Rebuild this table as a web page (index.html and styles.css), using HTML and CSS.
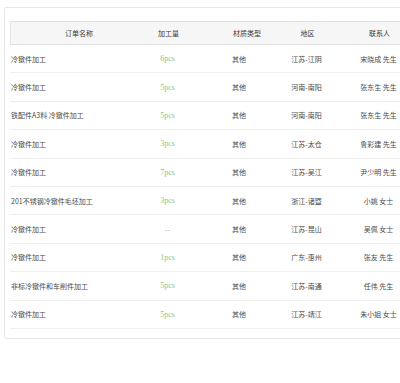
FILE: index.html
```html
<!DOCTYPE html>
<html lang="zh">
<head>
<meta charset="utf-8">
<link rel="stylesheet" href="styles.css">
</head>
<body>
<div class="card">
  <div class="table">
    <div class="row head">
      <div class="c1">订单名称</div>
      <div class="c2">加工量</div>
      <div class="c3">材质类型</div>
      <div class="c4">地区</div>
      <div class="c5">联系人</div>
    </div>
    <div class="row"><div class="c1">冷镦件加工</div><div class="c2 qty">6pcs</div><div class="c3">其他</div><div class="c4">江苏-江阴</div><div class="c5">宋晓成 先生</div></div>
    <div class="row"><div class="c1">冷镦件加工</div><div class="c2 qty">5pcs</div><div class="c3">其他</div><div class="c4">河南-南阳</div><div class="c5">张东生 先生</div></div>
    <div class="row"><div class="c1">铁配件A3料 冷镦件加工</div><div class="c2 qty">5pcs</div><div class="c3">其他</div><div class="c4">河南-南阳</div><div class="c5">张东生 先生</div></div>
    <div class="row"><div class="c1">冷镦件加工</div><div class="c2 qty">3pcs</div><div class="c3">其他</div><div class="c4">江苏-太仓</div><div class="c5">鲁彩建 先生</div></div>
    <div class="row"><div class="c1">冷镦件加工</div><div class="c2 qty">7pcs</div><div class="c3">其他</div><div class="c4">江苏-吴江</div><div class="c5">尹少明 先生</div></div>
    <div class="row"><div class="c1">201不锈钢冷镦件毛坯加工</div><div class="c2 qty">3pcs</div><div class="c3">其他</div><div class="c4">浙江-诸暨</div><div class="c5">小姚 女士</div></div>
    <div class="row"><div class="c1">冷镦件加工</div><div class="c2 dash">--</div><div class="c3">其他</div><div class="c4">江苏-昆山</div><div class="c5">吴佩 女士</div></div>
    <div class="row"><div class="c1">冷镦件加工</div><div class="c2 qty">1pcs</div><div class="c3">其他</div><div class="c4">广东-惠州</div><div class="c5">张友 先生</div></div>
    <div class="row"><div class="c1">非标冷镦件和车削件加工</div><div class="c2 qty">5pcs</div><div class="c3">其他</div><div class="c4">江苏-南通</div><div class="c5">任伟 先生</div></div>
    <div class="row"><div class="c1">冷镦件加工</div><div class="c2 qty">5pcs</div><div class="c3">其他</div><div class="c4">江苏-靖江</div><div class="c5">朱小姐 女士</div></div>
  </div>
</div>
</body>
</html>
```
FILE: styles.css
```css
html {
  overflow: hidden;
}
body {
  margin: 0;
  padding: 7px 0 0 4px;
  background: #fff;
  font-family: "Noto Sans CJK SC", "Noto Sans", sans-serif;
  font-size: 7px;
  color: #4a4a4a;
}
.card {
  width: 430px;
  box-sizing: border-box;
  border: 1px solid #e8e8e8;
  border-radius: 2px;
  padding: 13px 0 9px 5px;
}
.row {
  display: grid;
  grid-template-columns: 136px 43px 83px 69px 75px;
  height: 28.4px;
  box-sizing: border-box;
  border-bottom: 1px solid #efefef;
  align-items: center;
  white-space: nowrap;
}
.row.head {
  height: 24px;
  background: #f6f6f6;
  border-top: 1px solid #dedede;
  border-left: 1px solid #e4e4e4;
  border-bottom: 1px solid #e2e2e2;
  color: #3a3a3a;
}
.c1 {
  padding-left: 1px;
}
.head .c1 {
  padding-left: 0;
  text-align: center;
}
.c2, .c4, .c5 {
  text-align: center;
}
.c3 {
  padding-left: 43px;
}
.qty {
  color: #86c98c;
  font-family: "Liberation Serif", serif;
  font-size: 8px;
}
.dash {
  color: #aaa;
}
```
